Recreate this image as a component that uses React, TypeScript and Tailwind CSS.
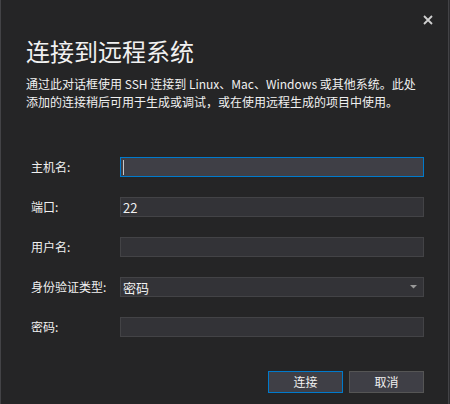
const fields = [
  { label: '主机名:', value: '', focused: true },
  { label: '端口:', value: '22' },
  { label: '用户名:', value: '' },
  { label: '身份验证类型:', value: '密码', select: true },
  { label: '密码:', value: '' },
]

export default function App() {
  return (
    <div className="w-[450px] h-[404px] bg-[#2d2d30] flex font-['Noto_Sans_CJK_SC','Noto_Sans',sans-serif] text-[#f1f1f1]">
      <div className="w-[449px] h-full bg-[#252526] border-x border-[#434346] flex flex-col pl-[25px] pr-[24px]">
        {/* Close */}
        <div className="flex justify-end pt-[15px] -mr-[9px]">
          <svg width="10" height="10" viewBox="0 0 10 10" className="text-[#d0d0d0]">
            <path d="M1 1 L9 9 M9 1 L1 9" stroke="currentColor" strokeWidth="1.8" />
          </svg>
        </div>

        {/* Header */}
        <h1 className="mt-[10px] text-[24px] leading-[32px] font-normal">连接到远程系统</h1>
        <p className="mt-[8px] text-[12px] leading-[18px] whitespace-nowrap">
          通过此对话框使用 SSH 连接到 Linux、Mac、Windows 或其他系统。此处
          <br />
          添加的连接稍后可用于生成或调试，或在使用远程生成的项目中使用。
        </p>

        {/* Form */}
        <div className="mt-[46px] flex flex-col gap-5">
          {fields.map((f) => (
            <div key={f.label} className="flex items-center h-5">
              <div className="w-[94px] pl-[5px] text-[12px]">{f.label}</div>
              <div
                className={
                  f.focused
                    ? 'flex-1 h-5 flex items-center px-[2px] bg-[#3f3f46] border border-[#007acc]'
                    : 'flex-1 h-5 flex items-center px-[2px] bg-[#333337] border border-[#434346]'
                }
              >
                {f.focused && <div className="w-px h-[15px] bg-[#c8c8c8]" />}
                <span className="text-[13px] leading-none">{f.value}</span>
                {f.select && (
                  <svg width="7" height="4" viewBox="0 0 7 4" className="ml-auto mr-[4px]">
                    <path d="M0 0 H7 L3.5 3.5 Z" fill="#999999" />
                  </svg>
                )}
              </div>
            </div>
          ))}
        </div>

        {/* Buttons */}
        <div className="mt-[34px] flex justify-end gap-[6px]">
          <button className="w-[75px] h-[22px] bg-[#3f3f46] border border-[#007acc] text-[12px] text-[#f1f1f1]">
            连接
          </button>
          <button className="w-[75px] h-[22px] bg-[#3f3f46] border border-[#555555] text-[12px] text-[#f1f1f1]">
            取消
          </button>
        </div>
      </div>
    </div>
  )
}
